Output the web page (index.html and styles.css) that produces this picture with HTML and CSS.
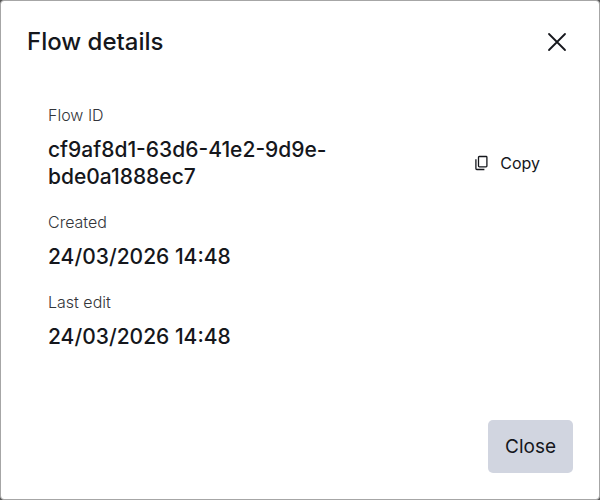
FILE: index.html
```html
<!DOCTYPE html>
<html lang="en">
<head>
    <meta charset="UTF-8">
    <meta name="viewport" content="width=device-width, initial-scale=1.0">
    <title>Flow details</title>
    <link rel="stylesheet" href="styles.css">
</head>
<body>
    <div class="dialog" role="dialog" aria-labelledby="dialogTitle">
        <header class="dialog-header">
            <h1 id="dialogTitle">Flow details</h1>
            <button class="icon-button" type="button" aria-label="Close dialog">
                <svg width="20" height="20" viewBox="0 0 20 20" fill="none" stroke="currentColor" stroke-width="1.8" stroke-linecap="round">
                    <path d="M2 2L18 18M18 2L2 18"/>
                </svg>
            </button>
        </header>
        <dl class="details">
            <div class="detail">
                <dt>Flow ID</dt>
                <dd>
                    <span class="flow-id">cf9af8d1-63d6-41e2-9d9e-bde0a1888ec7</span>
                    <button class="copy-button" type="button">
                        <svg width="14" height="16" viewBox="0 0 14 16" fill="none" stroke="currentColor" stroke-width="1.3">
                            <rect x="4.5" y="1.5" width="8.4" height="10.4" rx="0.8"/>
                            <path d="M1.9 4.2V13.6Q1.9 14.5 2.8 14.5H10.4"/>
                        </svg>
                        Copy
                    </button>
                </dd>
            </div>
            <div class="detail">
                <dt>Created</dt>
                <dd>24/03/2026 14:48</dd>
            </div>
            <div class="detail">
                <dt>Last edit</dt>
                <dd>24/03/2026 14:48</dd>
            </div>
        </dl>
        <footer class="dialog-footer">
            <button class="button" type="button">Close</button>
        </footer>
    </div>
</body>
</html>
```

FILE: styles.css
```css
* { box-sizing: border-box; }
body { margin: 0; background-color: #555; color: #15171c; font-family: Inter, "Liberation Sans", sans-serif; }
h1, dl, dd { margin: 0; }
button { padding: 0; border: 0; background: none; color: inherit; font-family: inherit; cursor: pointer; }
svg { display: block; }
.dialog { display: flex; flex-direction: column; min-height: 100vh; padding: 26px; background-color: #fff; border: 1px solid #a6a6a6; border-radius: 4px; }
.dialog-header { display: flex; align-items: center; justify-content: space-between; margin-bottom: 46px; }
.dialog-header h1 { font-size: 24px; font-weight: 500; line-height: 30px; }
.icon-button { padding: 5px 6px; }
.details { display: flex; flex-direction: column; gap: 20px; padding: 0 21px; }
.detail dt { margin-bottom: 9px; color: #33353a; font-size: 16px; font-weight: 300; line-height: 24px; }
.detail dd { display: flex; align-items: center; justify-content: space-between; font-size: 21px; font-weight: 500; line-height: 27px; }
.flow-id { max-width: 300px; }
.copy-button { display: flex; align-items: center; gap: 12px; margin-right: 12px; font-size: 16px; line-height: 24px; }
.dialog-footer { display: flex; justify-content: flex-end; margin-top: auto; }
.button { padding: 13px 17px; background-color: #d1d5e0; border-radius: 5px; font-size: 19px; line-height: 27px; }
.button:hover { background-color: #c4c9d6; }
```
